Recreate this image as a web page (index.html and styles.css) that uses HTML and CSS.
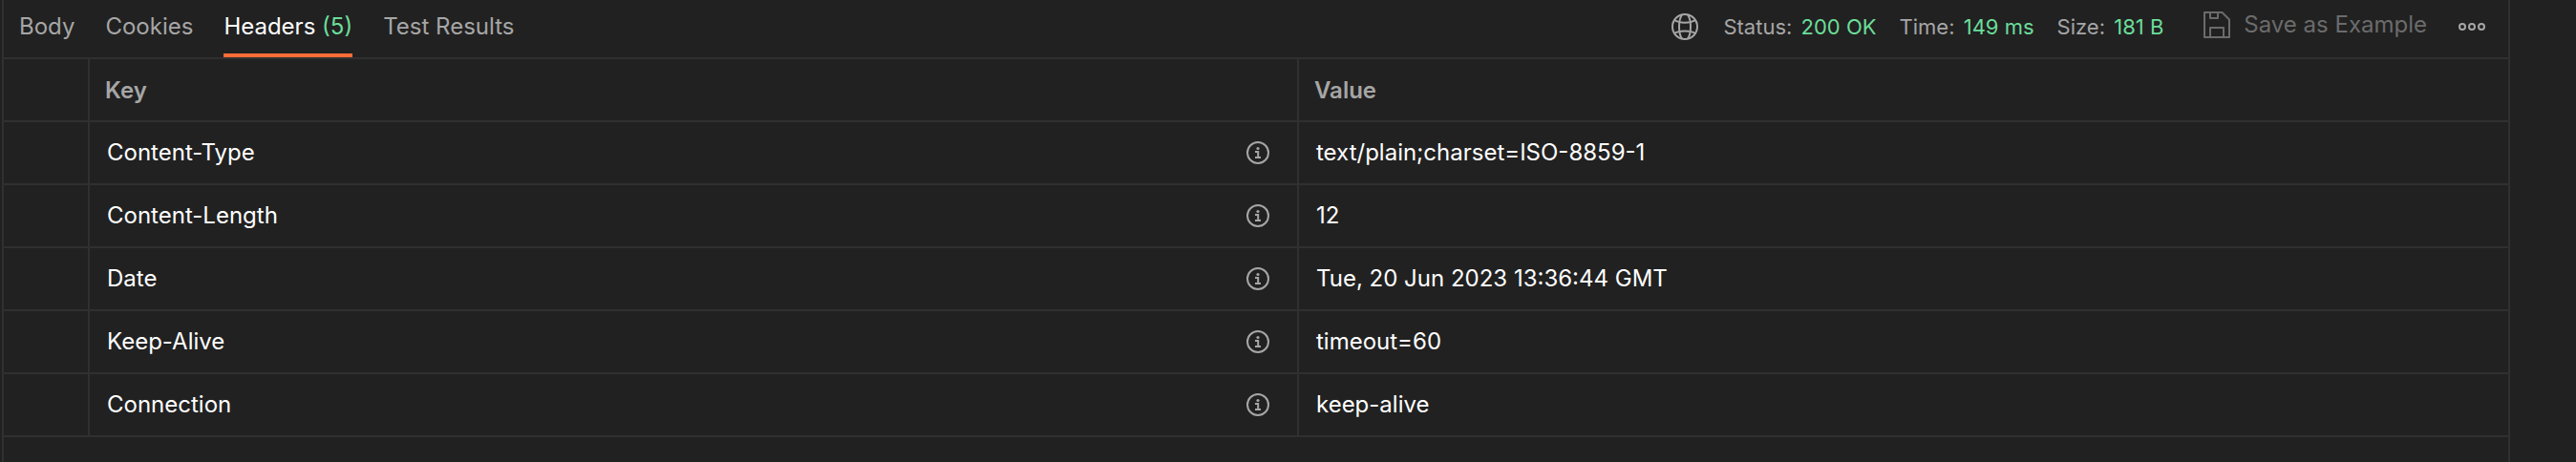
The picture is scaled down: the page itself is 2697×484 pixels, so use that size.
FILE: index.html
```html
<!DOCTYPE html>
<html lang="en">
<head>
<meta charset="utf-8">
<title>Response headers</title>
<link rel="stylesheet" href="styles.css">
</head>
<body>
<svg class="sprite" aria-hidden="true">
  <symbol id="info" viewBox="0 0 24 24">
    <circle cx="12" cy="12" r="11" fill="none" stroke="currentColor" stroke-width="2"/>
    <circle cx="12" cy="7.5" r="1.6" fill="currentColor"/>
    <path d="M9 11h3.2v6M9 17h6" fill="none" stroke="currentColor" stroke-width="2"/>
  </symbol>
</svg>
<main class="response">
  <header class="bar">
    <nav class="tabs">
      <button class="tab" type="button">Body</button>
      <button class="tab" type="button">Cookies</button>
      <button class="tab tab-active" type="button">Headers <span class="good">(5)</span></button>
      <button class="tab" type="button">Test Results</button>
    </nav>
    <div class="meta">
      <button class="icon-button globe" type="button" aria-label="Network">
        <svg width="28" height="28" viewBox="0 0 28 28" fill="none" stroke="currentColor" stroke-width="2">
          <circle cx="14" cy="14" r="13"/>
          <path d="M11 1.500C7 7 7 21 11 26.500M17 1.500C21 7 21 21 17 26.500M3 7C8 10.500 20 10.500 25 7M3 21C8 17.500 20 17.500 25 21"/>
        </svg>
      </button>
      <span class="stat">Status: <span class="good">200 OK</span></span>
      <span class="stat">Time: <span class="good">149 ms</span></span>
      <span class="stat">Size: <span class="good">181 B</span></span>
      <button class="save" type="button">
        <svg width="28" height="28" viewBox="0 0 28 28" fill="none" stroke="currentColor" stroke-width="2" stroke-linejoin="round">
          <path d="M1 1h18.500L27 8.500V27H1zM7 1v6h8V1M7 27V17h14v10"/>
        </svg>
        Save as Example
      </button>
      <button class="icon-button more" type="button" aria-label="More options">
        <svg width="28" height="10" viewBox="0 0 28 10" fill="none" stroke="currentColor" stroke-width="2">
          <circle cx="4" cy="5" r="3"/><circle cx="14" cy="5" r="3"/><circle cx="24" cy="5" r="3"/>
        </svg>
      </button>
    </div>
  </header>
  <table class="headers">
    <colgroup><col class="col-mark"><col><col></colgroup>
    <thead>
      <tr><th></th><th scope="col">Key</th><th scope="col">Value</th></tr>
    </thead>
    <tbody>
      <tr><td></td><td><div class="key">Content-Type<svg class="info" role="img" aria-label="Info"><use href="#info"/></svg></div></td><td>text/plain;charset=ISO-8859-1</td></tr>
      <tr><td></td><td><div class="key">Content-Length<svg class="info" role="img" aria-label="Info"><use href="#info"/></svg></div></td><td>12</td></tr>
      <tr><td></td><td><div class="key">Date<svg class="info" role="img" aria-label="Info"><use href="#info"/></svg></div></td><td>Tue, 20 Jun 2023 13:36:44 GMT</td></tr>
      <tr><td></td><td><div class="key">Keep-Alive<svg class="info" role="img" aria-label="Info"><use href="#info"/></svg></div></td><td>timeout=60</td></tr>
      <tr><td></td><td><div class="key">Connection<svg class="info" role="img" aria-label="Info"><use href="#info"/></svg></div></td><td>keep-alive</td></tr>
    </tbody>
  </table>
</main>
</body>
</html>
```
FILE: styles.css
```css
* {
  box-sizing: border-box;
}

body {
  margin: 0;
  background: #212121;
  color: #fff;
  font: 24px/32px Inter, "Liberation Sans", sans-serif;
}

button {
  padding: 0;
  border: 0;
  background: none;
  color: inherit;
  font: inherit;
  cursor: pointer;
}

svg {
  display: block;
  flex: none;
}

.sprite {
  position: absolute;
  width: 0;
  height: 0;
}

.response {
  min-height: 100vh;
  margin: 0 69px 0 2px;
  border: solid #303030;
  border-width: 0 2px;
}

.bar {
  display: flex;
  justify-content: space-between;
  height: 62px;
  border-bottom: 2px solid #303030;
  color: #a6a6a6;
}

.tabs {
  display: flex;
  gap: 32px;
  padding-left: 16px;
}

.tab {
  border-bottom: 4px solid transparent;
}

.tab-active {
  border-color: #ff6c37;
  color: #fff;
}

.good {
  color: #6bdd9a;
}

.meta {
  display: flex;
  align-items: center;
  padding: 0 24px 4px 0;
  font-size: 22px;
}

.globe {
  margin-right: 26px;
}

.stat {
  margin-right: 24px;
}

.stat .good {
  margin-left: 3px;
}

.save {
  display: flex;
  align-items: center;
  gap: 14px;
  margin: 0 33px 4px 18px;
  color: #6b6b6b;
  font-size: 24px;
}

.headers {
  width: 100%;
  border-spacing: 0;
  table-layout: fixed;
}

.col-mark {
  width: 90px;
}

.headers th,
.headers td {
  height: 66px;
  padding: 0 18px;
  border: solid #303030;
  border-width: 0 2px 2px 0;
  text-align: left;
}

.headers th {
  padding: 2px 16px 0;
  color: #a6a6a6;
  font-weight: 600;
}

.headers th:last-child,
.headers td:last-child {
  border-right: 0;
}

.key {
  display: flex;
  align-items: center;
  justify-content: space-between;
  padding-right: 11px;
}

.info {
  width: 24px;
  height: 24px;
  color: #a6a6a6;
}
```
